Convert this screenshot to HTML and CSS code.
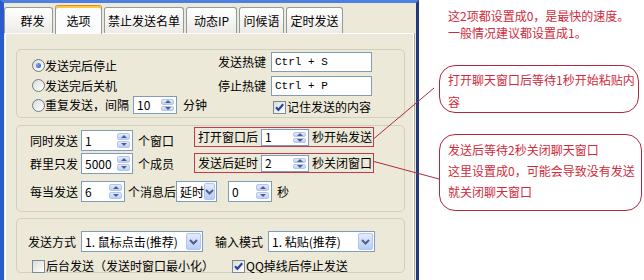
FILE: index.html
```html
<!DOCTYPE html>
<html lang="zh-CN">
<head>
<meta charset="utf-8">
<title>群发设置</title>
<link rel="stylesheet" href="styles.css">
</head>
<body>
<div class="page">
  <div class="window">
    <div class="tabs">
      <div class="tab t1">群发</div>
      <div class="tab t2 sel">选项</div>
      <div class="tab t3">禁止发送名单</div>
      <div class="tab t4">动态IP</div>
      <div class="tab t5">问候语</div>
      <div class="tab t6">定时发送</div>
    </div>
    <div class="panel">
      <div class="group g1">
        <div class="g1-left">
          <div class="opt o1"><span class="radio on"></span>发送完后停止</div>
          <div class="opt o2"><span class="radio"></span>发送完后关机</div>
          <div class="opt o3"><span class="radio"></span>重复发送，间隔<span class="edit e-interval"><span class="val">10</span><span class="spin"><i class="up"></i><i class="down"></i></span></span>分钟</div>
        </div>
        <div class="g1-right">
          <div class="krow"><span class="lbl">发送热键</span><span class="edit e-key">Ctrl + S</span></div>
          <div class="krow k2"><span class="lbl">停止热键</span><span class="edit e-key">Ctrl + P</span></div>
          <div class="crow remember"><span class="check on"><svg viewBox="0 0 11 11" width="11" height="11"><path d="M2 5.2l2.4 2.6L9.2 2.2" fill="none" stroke="#2346a0" stroke-width="2.1"/></svg></span>记住发送的内容</div>
        </div>
      </div>

      <div class="group g2">
        <div class="g2-top">
          <div class="g2-left">
            <div class="frow"><span class="lbl">同时发送</span><span class="edit e-num"><span class="val">1</span><span class="spin"><i class="up"></i><i class="down"></i></span></span>个窗口</div>
            <div class="frow"><span class="lbl">群里只发</span><span class="edit e-num"><span class="val">5000</span><span class="spin"><i class="up"></i><i class="down"></i></span></span>个成员</div>
          </div>
          <div class="g2-right">
            <div class="redbox"><span class="rl">打开窗口后</span><span class="edit e-sec"><span class="val">1</span><span class="spin"><i class="up"></i><i class="down"></i></span></span>秒开始发送</div>
            <div class="redbox"><span class="rl">发送后延时</span><span class="edit e-sec"><span class="val">2</span><span class="spin"><i class="up"></i><i class="down"></i></span></span>秒关闭窗口</div>
          </div>
        </div>
        <div class="frow row3">
          <span class="lbl">每当发送</span><span class="edit e-six"><span class="val">6</span><span class="spin"><i class="up"></i><i class="down"></i></span></span>个消息后<span class="combo c-delay"><span class="txt">延时</span><span class="dd"><svg viewBox="0 0 9 6" width="9" height="6"><path d="M1 1l3.5 3.5L8 1" fill="none" stroke="#4d6185" stroke-width="2"/></svg></span></span><span class="edit e-zero"><span class="val">0</span><span class="spin"><i class="up"></i><i class="down"></i></span></span>秒
        </div>
      </div>

      <div class="group g3">
        <div class="frow">
          <span class="lbl">发送方式</span><span class="combo c-mode"><span class="txt">1. 鼠标点击(推荐)</span><span class="dd"><svg viewBox="0 0 9 6" width="9" height="6"><path d="M1 1l3.5 3.5L8 1" fill="none" stroke="#4d6185" stroke-width="2"/></svg></span></span><span class="lbl lbl2">输入模式</span><span class="combo c-input"><span class="txt">1. 粘贴(推荐)</span><span class="dd"><svg viewBox="0 0 9 6" width="9" height="6"><path d="M1 1l3.5 3.5L8 1" fill="none" stroke="#4d6185" stroke-width="2"/></svg></span></span>
        </div>
        <div class="crow g3-checks">
          <span class="citem cb1"><span class="check"></span>后台发送（发送时窗口最小化）</span>
          <span class="citem"><span class="check on"><svg viewBox="0 0 11 11" width="11" height="11"><path d="M2 5.2l2.4 2.6L9.2 2.2" fill="none" stroke="#2346a0" stroke-width="2.1"/></svg></span>QQ掉线后停止发送</span>
        </div>
      </div>
    </div>
  </div>

  <div class="notes">
    <div class="note-line">这2项都设置成0，是最快的速度。</div>
    <div class="note-line">一般情况建议都设置成1。</div>
    <div class="bubble b1">打开聊天窗口后等待1秒开始粘贴内<br>容</div>
    <div class="bubble b2">发送后等待2秒关闭聊天窗口<br>这里设置成0，可能会导致没有发送<br>就关闭聊天窗口</div>
  </div>

  <svg class="leaders" width="644" height="280" viewBox="0 0 644 280">
    <line x1="374" y1="138.5" x2="434" y2="88" stroke="#b12a40" stroke-width="1"/>
    <line x1="374" y1="161.5" x2="439" y2="179" stroke="#b12a40" stroke-width="1"/>
  </svg>
</div>
</body>
</html>
```

FILE: styles.css
```css
* { box-sizing: border-box; margin: 0; padding: 0; }
html, body { width: 644px; height: 280px; overflow: hidden; background: #fff; }
body {
  font-family: "Noto Sans CJK SC", "Noto Sans", sans-serif;
  font-size: 12px;
  line-height: 14px;
  color: #000;
}
.page { position: relative; display: flex; width: 644px; height: 280px; }

/* ---------- window ---------- */
.window {
  width: 419px;
  height: 280px;
  flex: none;
  display: flex;
  flex-direction: column;
  background: #ECE9D8;
  border-top: 3px solid #4d80e0;
  border-left: 4px solid #2a5bcc;
  border-right: 3px solid #22397a;
}

.tabs {
  display: flex;
  align-items: flex-end;
  gap: 2px;
  height: 31px;
  padding-top: 2px;
}
.tab {
  height: 26px;
  margin-bottom: 1px;
  display: flex;
  align-items: center;
  justify-content: center;
  border: 1px solid #919B9C;
  border-bottom: none;
  border-radius: 3px 3px 0 0;
  background: linear-gradient(#ffffff, #ecebe6);
  white-space: nowrap;
}
.tab.sel {
  position: relative;
  height: 29px;
  margin-bottom: 0;
  padding-top: 1px;
  background: #fcfcfe;
  border-top: 1px solid #e68b2c;
  box-shadow: inset 0 2px 0 #ffc83c;
}
.t1 { width: 49px; padding-left: 8px; }
.t2 { width: 47px; }
.t3 { width: 80px; }
.t4 { width: 51px; }
.t5 { width: 45px; }
.t6 { width: 57px; }

.panel {
  flex: 1;
  margin: -1px 2px 0 1px;
  padding: 15px 8px 0 10px;
  border: 1px solid #ffffff;
  border-bottom: none;
  box-shadow: 1px 0 0 #aca899;
  background: #ECE9D8;
}

.group {
  border: 1px solid #D0D0BF;
  border-radius: 5px;
}
.g1 { height: 69px; display: flex; }
.g2 { height: 87px; margin-top: 7px; padding-left: 13px; }
.g3 { height: 55px; margin-top: 6px; padding: 12px 0 0 11px; }

/* ---------- controls ---------- */
.edit {
  display: flex;
  align-items: center;
  flex: none;
  height: 21px;
  padding-left: 3px;
  border: 1px solid #7F9DB9;
  background: #fff;
}
.edit .val { flex: 1; line-height: 14px; }
.spin {
  width: 13px;
  height: calc(100% - 4px);
  margin-right: 2px;
  display: flex;
  flex-direction: column;
  gap: 1px;
}
.spin i {
  flex: 1;
  display: flex;
  align-items: center;
  justify-content: center;
  border: 1px solid #b3c5ef;
  border-radius: 2px;
  background: linear-gradient(#e3ebfe, #bccff7);
}
.spin .up::after {
  content: "";
  border-left: 3px solid transparent;
  border-right: 3px solid transparent;
  border-bottom: 3px solid #4d6185;
}
.spin .down::after {
  content: "";
  border-left: 3px solid transparent;
  border-right: 3px solid transparent;
  border-top: 3px solid #4d6185;
}

.combo {
  display: flex;
  align-items: center;
  flex: none;
  height: 21px;
  border: 1px solid #7F9DB9;
  background: #fff;
}
.combo .txt { flex: 1; padding-left: 3px; white-space: nowrap; }
.combo .dd {
  width: 15px;
  height: calc(100% - 2px);
  margin-right: 1px;
  display: flex;
  align-items: center;
  justify-content: center;
  border: 1px solid #b3c5ef;
  border-radius: 2px;
  background: linear-gradient(#e3ebfe, #b9cdf7);
}

.radio {
  width: 13px;
  height: 13px;
  flex: none;
  display: flex;
  align-items: center;
  justify-content: center;
  border: 1px solid #6d7b8c;
  border-radius: 50%;
  background: linear-gradient(135deg, #dcdcd6, #ffffff);
}
.radio.on::after {
  content: "";
  width: 5px;
  height: 5px;
  border-radius: 50%;
  background: radial-gradient(circle at 35% 35%, #7fa4ee, #2350c0);
}
.check {
  width: 13px;
  height: 13px;
  flex: none;
  display: flex;
  align-items: center;
  justify-content: center;
  margin-right: 1px;
  border: 1px solid #7a8a9c;
  background: linear-gradient(135deg, #dcdcd6, #ffffff);
}

/* ---------- group 1 ---------- */
.g1-left { width: 201px; padding: 5px 0 0 15px; }
.opt { display: flex; align-items: center; white-space: nowrap; }
.o1 { height: 21px; }
.o2 { height: 19px; }
.o3 { height: 20px; }
.e-interval { width: 44px; height: 18px; margin: 0 6px 0 4px; }

.g1-right { padding-top: 2px; }
.krow { display: flex; align-items: center; height: 20px; }
.k2 { margin-top: 4px; }
.lbl { width: 48px; flex: none; white-space: nowrap; }
.e-key {
  width: 101px;
  height: 20px;
  margin-left: 5px;
  font-family: "Liberation Mono", monospace;
  font-size: 11px;
}
.crow { display: flex; align-items: center; white-space: nowrap; }
.remember { height: 18px; margin-top: 2px; padding-left: 55px; }

/* ---------- group 2 ---------- */
.g2-top { display: flex; }
.g2-left {
  width: 164px;
  padding-top: 4px;
  display: flex;
  flex-direction: column;
  gap: 2px;
}
.frow { display: flex; align-items: center; height: 21px; white-space: nowrap; }
.e-num { width: 52px; margin: 0 5px 0 3px; }
.g2-right {
  padding-top: 1px;
  display: flex;
  flex-direction: column;
  gap: 6px;
}
.redbox {
  display: flex;
  align-items: center;
  width: 180px;
  height: 20px;
  padding-left: 3px;
  border: 1px solid #c23a4c;
  white-space: nowrap;
}
.e-sec { width: 48px; height: 17px; margin: 0 3px; }
.row3 { margin-top: 7px; }
.e-six { width: 44px; margin: 0 3px; }
.c-delay { width: 41px; }
.e-zero { width: 44px; margin: 0 5px 0 11px; }

/* ---------- group 3 ---------- */
.c-mode { width: 122px; margin-left: 5px; }
.lbl2 { margin-left: 12px; }
.c-input { width: 107px; margin-left: 5px; }
.g3-checks { height: 16px; margin-top: 6px; }
.citem { display: flex; align-items: center; }
.cb1 { width: 200px; margin-left: 4px; }

/* ---------- annotations ---------- */
.notes {
  flex: 1;
  padding: 7px 0 0 29px;
  color: #d02b3c;
  line-height: 17px;
  white-space: nowrap;
}
.note-line { height: 17px; }
.bubble {
  margin-left: -9px;
  padding-left: 8px;
  border: 1px solid #b4283e;
  border-radius: 16px;
}
.b1 { width: 200px; height: 48px; margin-top: 24px; padding-top: 3px; line-height: 22px; }
.b2 { width: 203px; height: 77px; margin-top: 21px; padding-top: 4px; line-height: 21px; }

.leaders { position: absolute; left: 0; top: 0; pointer-events: none; }
```
